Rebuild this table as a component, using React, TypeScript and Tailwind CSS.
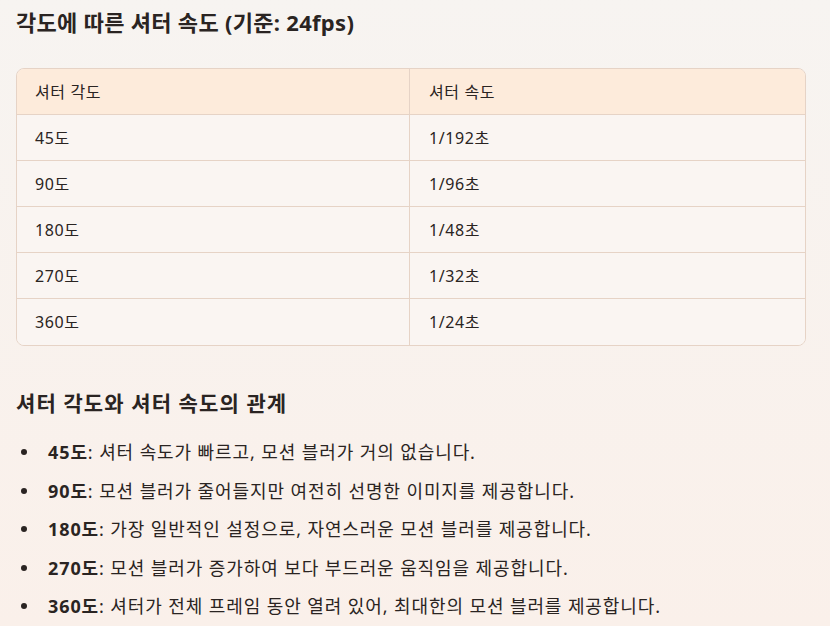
import React from "react";

const rows = [
  ["45도", "1/192초"],
  ["90도", "1/96초"],
  ["180도", "1/48초"],
  ["270도", "1/32초"],
  ["360도", "1/24초"],
];

const items: [string, string][] = [
  ["45도", ": 셔터 속도가 빠르고, 모션 블러가 거의 없습니다."],
  ["90도", ": 모션 블러가 줄어들지만 여전히 선명한 이미지를 제공합니다."],
  ["180도", ": 가장 일반적인 설정으로, 자연스러운 모션 블러를 제공합니다."],
  ["270도", ": 모션 블러가 증가하여 보다 부드러운 움직임을 제공합니다."],
  ["360도", ": 셔터가 전체 프레임 동안 열려 있어, 최대한의 모션 블러를 제공합니다."],
];

export default function App() {
  return (
    <div
      className="w-[830px] h-[626px] overflow-hidden bg-gradient-to-b from-[#f7f4f1] to-[#faf0ea] text-[#2a2422] px-4"
      style={{ fontFamily: '"Noto Sans", "Noto Sans CJK KR", sans-serif' }}
    >
      <h2 className="pt-[6px] text-[22px] font-bold leading-[32px] tracking-[0.3px]">각도에 따른 셔터 속도 (기준: 24fps)</h2>
      <div className="mt-[30px] w-[790px] rounded-lg border border-[#e6d3c6] overflow-hidden text-[16px] tracking-[0.6px]">
        <div className="grid grid-cols-[393px_1fr] h-[46px] bg-[#fdebdb] border-b border-[#e6d3c6]">
          <div className="flex items-center pl-[18px] border-r border-[#e6d3c6]">셔터 각도</div>
          <div className="flex items-center pl-[19px]">셔터 속도</div>
        </div>
        {rows.map((r, i) => (
          <div
            key={i}
            className={`grid grid-cols-[393px_1fr] h-[46px] bg-[#faf5f2] ${i < rows.length - 1 ? "border-b border-[#e6d3c6]" : ""}`}
          >
            <div className="flex items-center pl-[18px] border-r border-[#e6d3c6]">{r[0]}</div>
            <div className="flex items-center pl-[19px]">{r[1]}</div>
          </div>
        ))}
      </div>
      <h3 className="mt-[42px] text-[21px] font-bold leading-[30px] tracking-[1.1px]">셔터 각도와 셔터 속도의 관계</h3>
      <ul className="mt-[21px] text-[18px] leading-[26px] tracking-[0.9px] flex flex-col gap-[12.5px]">
        {items.map(([b, t], i) => (
          <li key={i} className="flex items-center">
            <span className="w-[32px] shrink-0 flex items-center pl-[5px]">
              <span className="block w-[6px] h-[6px] rounded-full bg-[#2a2422]" />
            </span>
            <span>
              <b className="font-bold">{b}</b>
              {t}
            </span>
          </li>
        ))}
      </ul>
    </div>
  );
}
